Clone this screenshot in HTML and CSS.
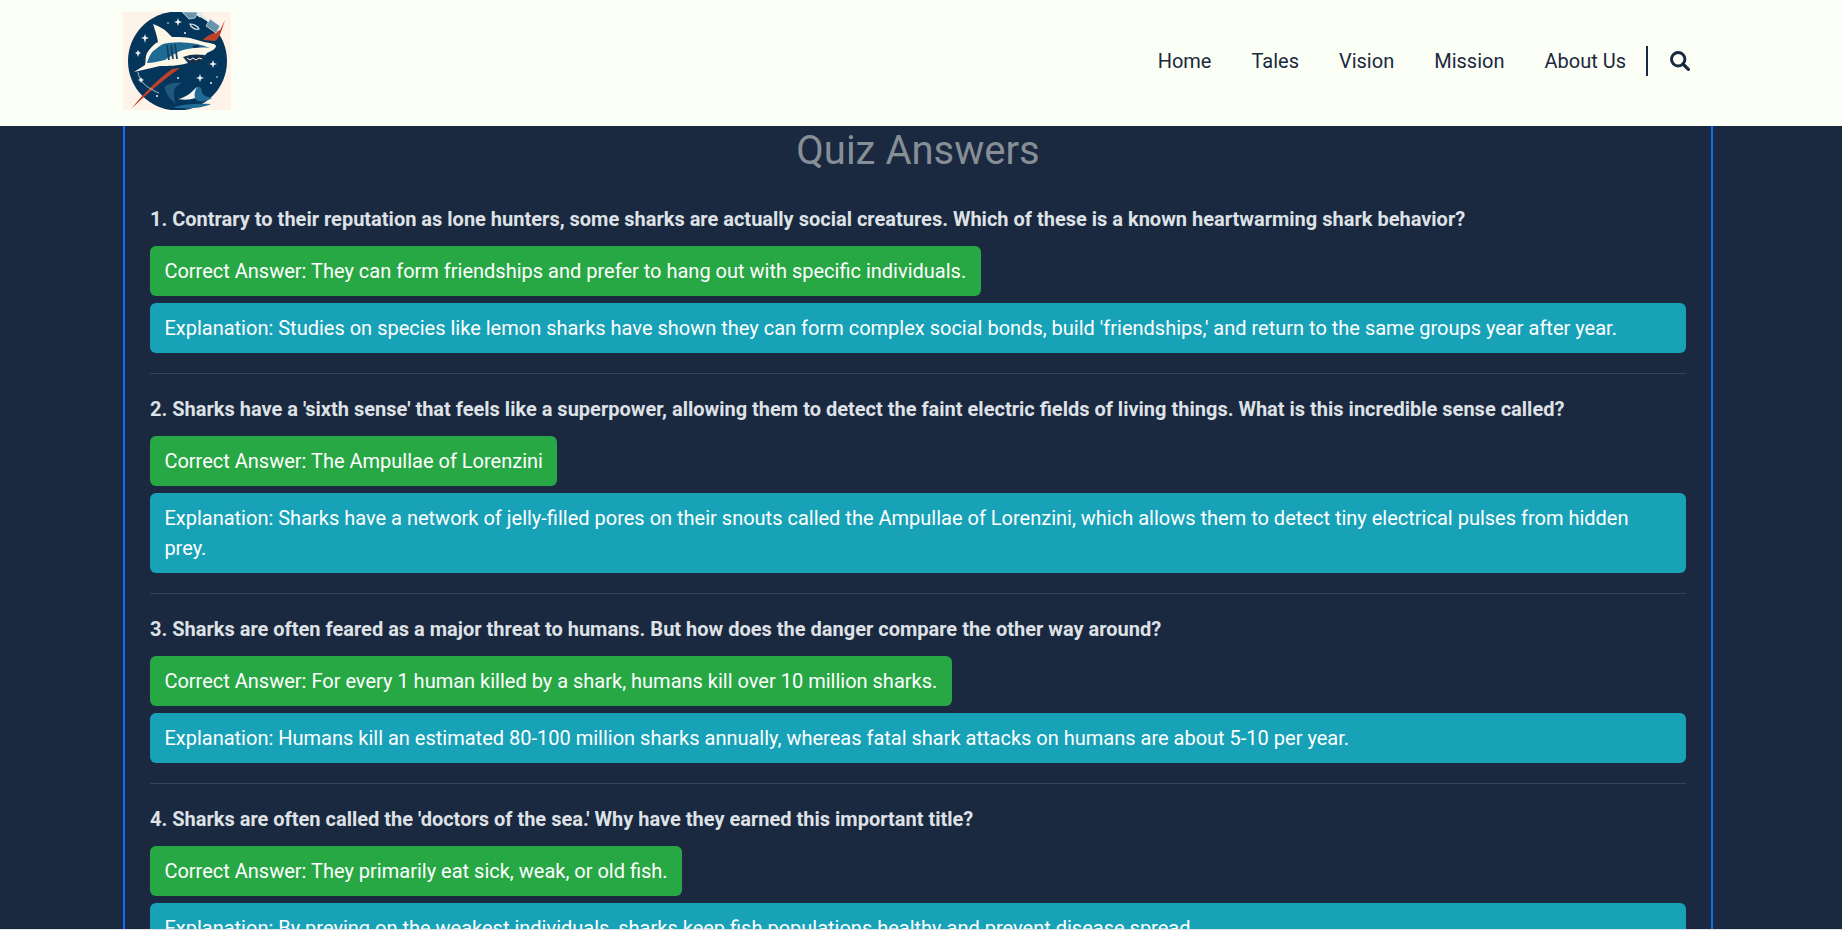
FILE: index.html
```html
<!DOCTYPE html>
<html lang="en">
<head>
<meta charset="utf-8">
<title>Quiz Answers</title>
<link rel="stylesheet" href="styles.css">
</head>
<body>
<header class="site-header">
  <div class="logo" role="img" aria-label="Shark logo">
    <svg viewBox="0 0 108 98" width="108" height="98">
      <rect width="108" height="98" fill="#fdf3e8"/>
      <circle cx="54.500" cy="49" r="49.500" fill="#04365c"/>
      <path d="M9 96C24 82 40 68 57 56l-8 1C34 68 20 82 9 96z" fill="#bd4128"/>
      <path d="M102 8l-4 12c-2 5-3 7-6 9l-12-1c2-2 5-5 9-6l8-4z" fill="#bd4128"/>
      <g fill="#6a93ad" stroke="#dfe8ea" stroke-width=".7">
        <path d="M59 0h16l-3 6-6 1z"/>
        <path d="M87 7l10 7-4 7-10-7z"/>
      </g>
      <path d="M74 0l10 8M79 0l-3 5" stroke="#dfe8ea" stroke-width="2" fill="none"/>
      <path d="M67 12c3 0 8 2 9 5-3 1-8-1-9-5z" fill="none" stroke="#dfe8ea" stroke-width="1.200"/>
      <path d="M11 60l11-7c1-4 0-8 2-12 3-5 7-9 11-11-1-6-3-12-5-18 6 2 11 5 14 8 2 2 4 4 5 5 8 0 13 0 18 1l14 4c6 1 12 2 12 4 0 3-5 5-9 7l-7 8-12 2c-10 3-20 3-28 3z" fill="#fdf7e8"/>
      <path d="M24 51c2-7 5-12 9-14 4-4 8-6 12-6 15-2 30 0 42 5-10-1-19 0-27 2-6 2-12 6-18 10-6 1-12 3-18 3z" fill="#1f6b93"/>
      <path d="M44 33l2 15M48 33l2 14M52 32l2 15" stroke="#12405f" stroke-width="1.800" fill="none"/>
      <path d="M60 45c7-3 14-3 22-2-2 4-4 7-7 8-3 1-7 1-10 0z" fill="#12304a"/>
      <path d="M64 46l3 2 3-2 3 2 3-2 3 1" stroke="#fdf7e8" stroke-width="1" fill="none"/>
      <path d="M69 34l6-1 2 2-6 1z" fill="#12304a"/>
      <path d="M15 60c1 8 6 13 13 17 4 2 7 4 8 4" stroke="#cfdde2" stroke-width=".8" fill="none"/>
      <path d="M42 74c5-3 11-4 17-3-5 2-8 5-8 10 0 4 0 7 2 11-6-5-12-12-11-18z" fill="#20597d"/>
      <path d="M67 83c2-4 4-7 7-8 3-1 5 2 5 6 2 3 6 4 10 5-5 3-10 4-14 3z" fill="#1f6b93"/>
      <path d="M55 87c7-1 13-6 19-12-2 4-3 7-2 11-5 2-11 2-17 1z" fill="#f2f5f2"/>
      <path d="M50 95c11-3 25-4 38-3-8 4-26 6-38 3z" fill="#1f6b93"/>
      <g fill="#eef3f2">
        <path d="M22 22l1 3 3 1-3 1-1 4-1-4-3-1 3-1z"/>
        <path d="M15 38l1 2 2 1-2 1-1 3-1-3-2-1 2-1z"/>
        <path d="M55 6l1 3 3 1-3 1-1 3-1-3-3-1 3-1z"/>
        <path d="M90 48l1 3 3 1-3 1-1 3-1-3-3-1 3-1z"/>
        <path d="M77 62l1 3 3 1-3 1-1 3-1-3-3-1 3-1z"/>
        <path d="M18 65l1 2 2 1-2 1-1 2-1-2-2-1 2-1z"/>
        <circle cx="45" cy="11" r=".8"/><circle cx="62" cy="21" r="1"/><circle cx="88" cy="71" r="1"/><circle cx="34" cy="84" r="1"/><circle cx="55" cy="66" r="1"/><circle cx="94" cy="65" r=".8"/>
      </g>
    </svg>
  </div>
  <nav class="main-nav">
    <a href="#">Home</a>
    <a href="#">Tales</a>
    <a href="#">Vision</a>
    <a href="#">Mission</a>
    <a href="#">About Us</a>
    <span class="nav-divider"></span>
    <svg class="search-icon" viewBox="0 0 20 20" width="20" height="20" aria-label="Search"><circle cx="8.200" cy="8.200" r="6.700" fill="none" stroke="#1a2840" stroke-width="3"/><path d="M13 13l5.400 5.400" fill="none" stroke="#1a2840" stroke-width="3.200" stroke-linecap="round"/></svg>
  </nav>
</header>
<main class="quiz">
  <h1 class="quiz-title">Quiz Answers</h1>

  <section class="qa">
    <p class="question">1. Contrary to their reputation as lone hunters, some sharks are actually social creatures. Which of these is a known heartwarming shark behavior?</p>
    <div class="answer">Correct Answer: They can form friendships and prefer to hang out with specific individuals.</div>
    <div class="explain">Explanation: Studies on species like lemon sharks have shown they can form complex social bonds, build 'friendships,' and return to the same groups year after year.</div>
  </section>
  <hr class="rule">
  <section class="qa">
    <p class="question">2. Sharks have a 'sixth sense' that feels like a superpower, allowing them to detect the faint electric fields of living things. What is this incredible sense called?</p>
    <div class="answer">Correct Answer: The Ampullae of Lorenzini</div>
    <div class="explain">Explanation: Sharks have a network of jelly-filled pores on their snouts called the Ampullae of Lorenzini, which allows them to detect tiny electrical pulses from hidden prey.</div>
  </section>
  <hr class="rule">
  <section class="qa">
    <p class="question">3. Sharks are often feared as a major threat to humans. But how does the danger compare the other way around?</p>
    <div class="answer">Correct Answer: For every 1 human killed by a shark, humans kill over 10 million sharks.</div>
    <div class="explain">Explanation: Humans kill an estimated 80-100 million sharks annually, whereas fatal shark attacks on humans are about 5-10 per year.</div>
  </section>
  <hr class="rule">
  <section class="qa">
    <p class="question">4. Sharks are often called the 'doctors of the sea.' Why have they earned this important title?</p>
    <div class="answer">Correct Answer: They primarily eat sick, weak, or old fish.</div>
    <div class="explain">Explanation: By preying on the weakest individuals, sharks keep fish populations healthy and prevent disease spread.</div>
  </section>
</main>
<div class="page-edge"></div>
</body>
</html>
```

FILE: styles.css
```css
* { box-sizing: border-box; }
html, body { margin: 0; height: 100%; overflow: hidden; }
body {
  background: #1a2840;
  font-family: Roboto, "Liberation Sans", sans-serif;
  font-size: 20px;
  line-height: 1.5;
  color: #fff;
}
.site-header {
  height: 126px;
  background: #fbfff5;
  display: flex;
  align-items: center;
  justify-content: space-between;
  padding: 0 152px 4px 123px;
}
.logo { width: 108px; height: 98px; overflow: hidden; }
.logo svg { display: block; filter: blur(.35px); }
.main-nav { display: flex; align-items: center; gap: 40px; }
.main-nav a { color: #1a2840; text-decoration: none; }
.nav-divider { width: 2px; height: 30px; background: #1a2840; margin: 0 -18px 0 -20px; }
.search-icon { display: block; }
.quiz {
  width: 1590px;
  margin-left: 123px;
  border-left: 2px solid #0d6efd;
  border-right: 2px solid #0d6efd;
  padding: 0 25px;
  height: 803px;
  overflow: hidden;
}
.quiz-title {
  margin: 0 0 29px;
  padding-top: 1px;
  text-align: center;
  font-size: 40px;
  font-weight: 400;
  line-height: 48px;
  color: #868e96;
}
.question {
  margin: 0 0 12px;
  font-weight: 700;
  color: #dee2e6;
}
.answer, .explain {
  padding: 10px 14.400px;
  border-radius: 6px;
  margin-bottom: 7px;
  color: #fff;
}
.answer { background: #28a745; width: fit-content; }
.explain { background: #17a2b8; }
.rule { border: 0; border-top: 1px solid #35425a; margin: 20px 0 20px; }
.page-edge { height: 1px; background: #e4e4e4; }
```
